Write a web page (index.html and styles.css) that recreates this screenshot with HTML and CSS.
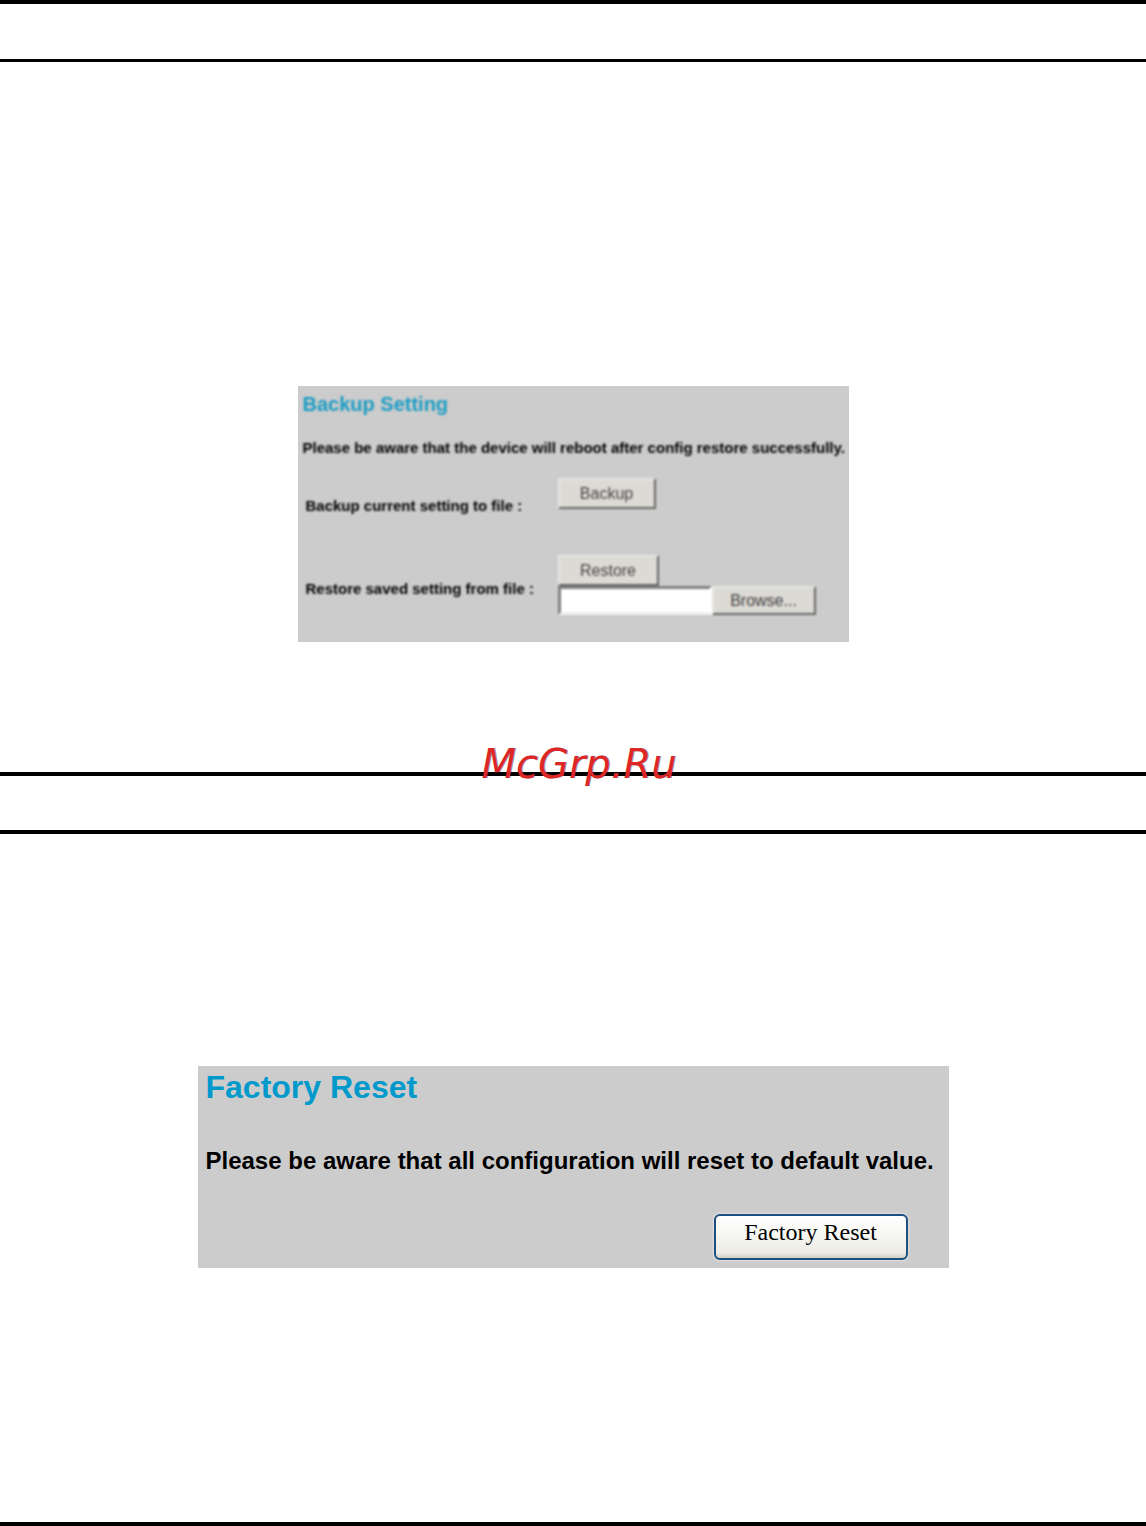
FILE: index.html
```html
<!DOCTYPE html>
<html lang="en">

<head>
    <meta charset="UTF-8">
    <meta name="viewport" content="width=device-width, initial-scale=1.0">
    <title>Backup Setting / Factory Reset</title>
    <link rel="stylesheet" href="styles.css">
</head>

<body>

    <!-- Backup Setting -->
    <section class="page">
        <div class="title-bar title-bar-thin"></div>
        <form class="panel backup-panel">
            <h2 class="backup-title">Backup Setting</h2>
            <p class="backup-notice">Please be aware that the device will reboot after config restore successfully.</p>

            <div class="setting-row">
                <label for="backup">Backup current setting to file :</label>
                <button type="button" id="backup" class="classic-button">Backup</button>
            </div>

            <div class="setting-row restore-row">
                <label for="restoreFile">Restore saved setting from file :</label>
                <div class="restore-controls">
                    <button type="submit" class="classic-button restore-button">Restore</button>
                    <div class="file-picker">
                        <input type="text" id="restoreFile" class="file-input">
                        <button type="button" class="classic-button browse-button">Browse...</button>
                    </div>
                </div>
            </div>
        </form>
    </section>

    <!-- Factory Reset -->
    <section class="page">
        <div class="title-bar">
            <span class="watermark">McGrp.Ru</span>
        </div>
        <form class="panel reset-panel">
            <h2 class="reset-title">Factory Reset</h2>
            <p class="reset-notice">Please be aware that all configuration will reset to default value.</p>
            <button type="submit" class="reset-button">Factory Reset</button>
        </form>
    </section>

</body>

</html>
```
FILE: styles.css
```css
* {
    box-sizing: border-box;
}

body {
    margin: 0;
    font-family: "Liberation Sans", Arial, sans-serif;
    background-color: #fff;
    color: #000;
    border-bottom: 4px solid #000;
}

h2,
p {
    margin: 0;
}

.title-bar {
    position: relative;
    height: 62px;
    border-top: 4px solid #000;
    border-bottom: 4px solid #000;
}

.title-bar-thin {
    border-bottom-width: 3px;
}

.watermark {
    position: absolute;
    top: -36px;
    left: 0;
    right: 0;
    padding-left: 12px;
    font-family: "DejaVu Sans", sans-serif;
    font-size: 40px;
    font-style: italic;
    line-height: 48px;
    text-align: center;
    color: #dd2626;
    text-shadow: 1px 0 rgba(40, 40, 70, 0.5);
}

.panel {
    margin: 0 auto;
    background-color: #ccc;
}

/* Backup Setting */
.backup-panel {
    max-width: 551px;
    margin-top: 324px;
    margin-bottom: 130px;
    padding: 6px 0 27px 5px;
}

.backup-title,
.backup-notice,
.setting-row {
    filter: blur(1px);
}

.backup-title {
    font-size: 20px;
    line-height: 24px;
    color: #1a9cc4;
}

.backup-notice {
    margin-top: 20px;
    font-size: 15px;
    font-weight: bold;
    line-height: 24px;
    white-space: nowrap;
}

.setting-row {
    display: grid;
    grid-template-columns: 252px 1fr;
    align-items: start;
    margin-top: 18px;
    padding-left: 3px;
    font-size: 15px;
    font-weight: bold;
    line-height: 24px;
}

.setting-row label {
    padding-top: 16px;
    white-space: nowrap;
}

.restore-row {
    margin-top: 37px;
}

.restore-row label {
    padding-top: 22px;
}

.classic-button {
    width: 98px;
    height: 31px;
    padding: 0;
    font-family: inherit;
    font-size: 16px;
    color: #444;
    background-color: #dcdad4;
    border: 2px solid;
    border-color: #e4e4e0 #666 #666 #e4e4e0;
}

.restore-controls {
    display: flex;
    flex-direction: column;
    align-items: flex-start;
}

.restore-button {
    width: 101px;
}

.file-picker {
    display: flex;
}

.file-input {
    width: 154px;
    height: 29px;
    padding: 2px 4px;
    background-color: #fff;
    border: 3px solid;
    border-color: #808080 #fff #eee #808080;
    border-radius: 0;
    font-size: 15px;
}

.browse-button {
    width: 104px;
    height: 29px;
}

/* Factory Reset */
.reset-panel {
    display: flex;
    flex-direction: column;
    max-width: 751px;
    margin-top: 232px;
    margin-bottom: 254px;
    padding: 2px 41px 8px 8px;
}

.reset-title {
    font-size: 32px;
    line-height: 38px;
    color: #0099cc;
}

.reset-notice {
    margin-top: 40px;
    font-size: 24px;
    font-weight: bold;
    line-height: 30px;
    white-space: nowrap;
}

.reset-button {
    align-self: flex-end;
    width: 194px;
    height: 46px;
    margin-top: 38px;
    padding: 0 0 10px;
    font-family: "Liberation Serif", "Times New Roman", serif;
    font-size: 24px;
    line-height: 28px;
    color: #000;
    background: linear-gradient(#fff, #f3f3ee 60%, #ecebe4 88%, #d6d0c4);
    border: 2px solid #1c5080;
    border-radius: 6px;
    box-shadow: 0 0 2px 1px #e0e0e0;
}
```
